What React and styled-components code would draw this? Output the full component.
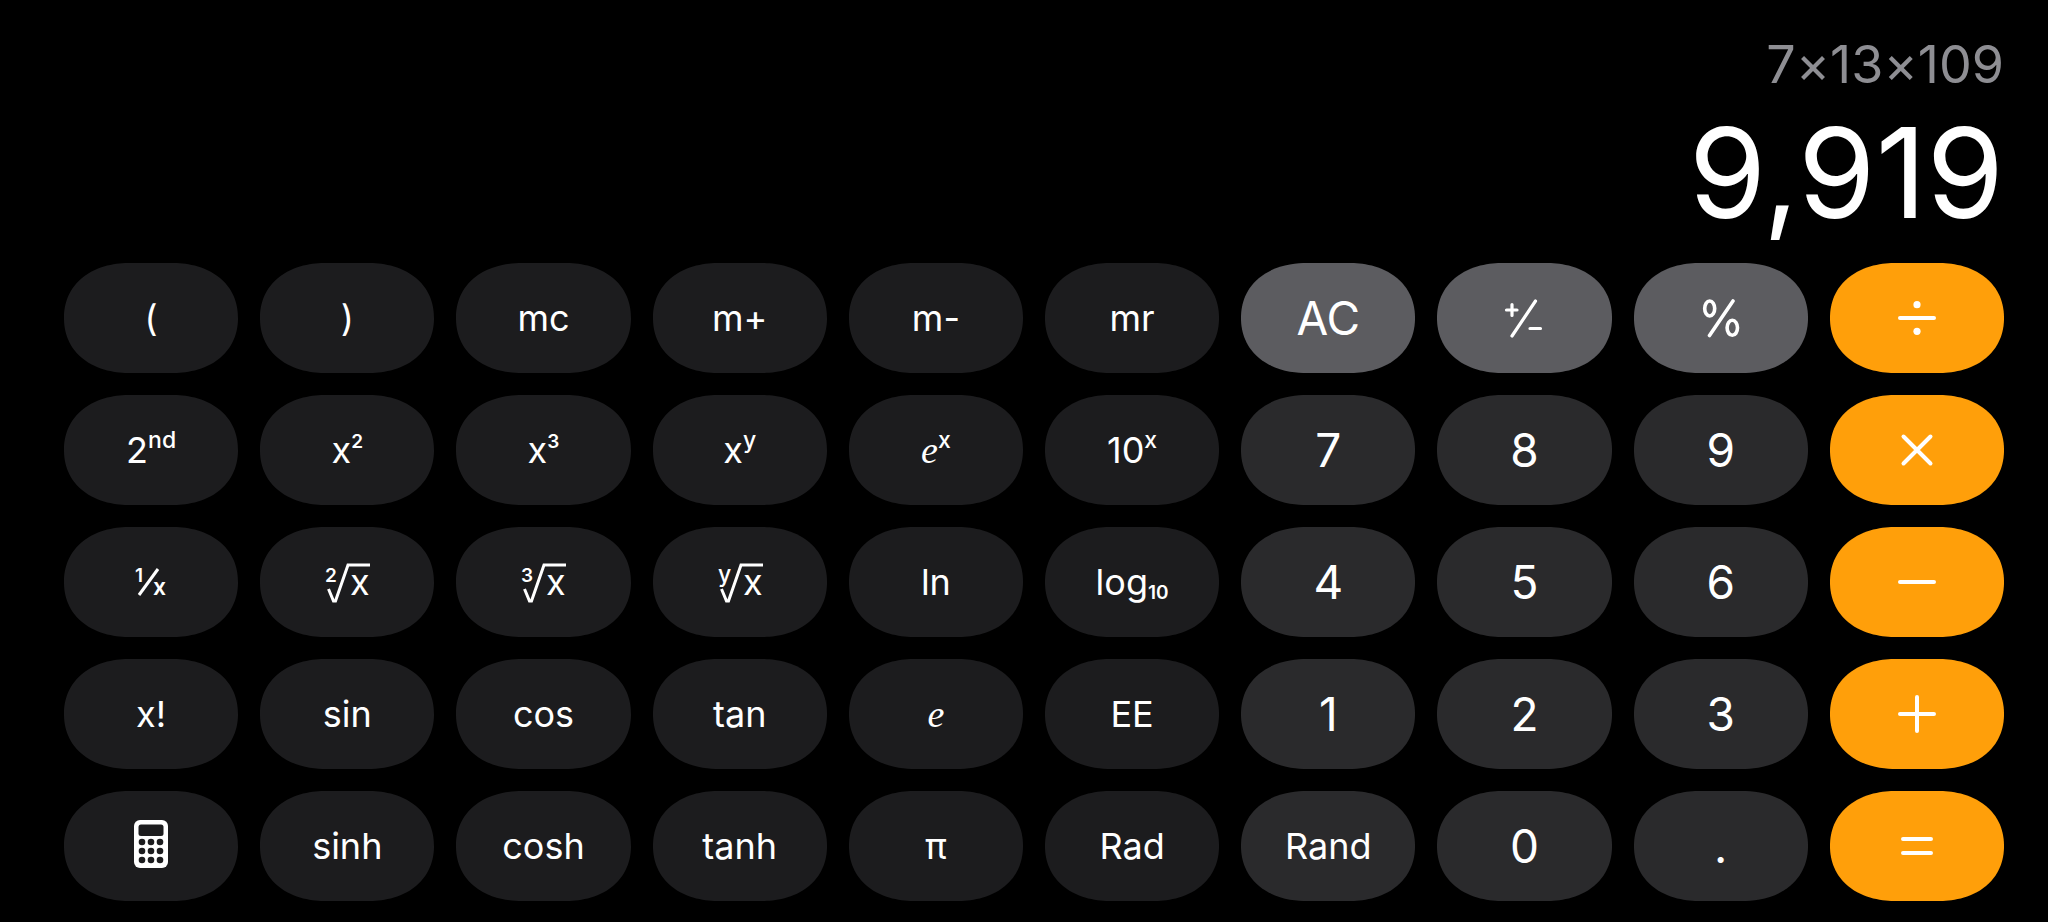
import React from 'react';
import styled, { createGlobalStyle } from 'styled-components';

const GlobalStyle = createGlobalStyle`
  * {
    box-sizing: border-box;
  }

  body {
    margin: 0;
    background: #000;
    font-family: Inter, "Liberation Sans", sans-serif;
  }
`;

const Calculator = styled.main`
  min-height: 100vh;
  display: flex;
  flex-direction: column;
  padding: 33px 44px 21px 64px;
  color: #fff;
`;

const Display = styled.header`
  flex: 1;
  display: flex;
  flex-direction: column;
  align-items: flex-end;
  font-variant-ligatures: no-contextual;
`;

const Expression = styled.div`
  font-size: 52px;
  line-height: 64px;
  color: #8e8e93;
`;

const Result = styled.output`
  font-size: 125px;
  line-height: 152px;
`;

const Keypad = styled.section`
  display: grid;
  grid-template-columns: repeat(10, 1fr);
  grid-auto-rows: 110px;
  gap: 22px;
`;

const keyColors = {
  fn: '#1c1c1e',
  num: '#2a2a2c',
  util: '#5c5c60',
  op: '#ff9f0a',
};

const Key = styled.button`
  display: flex;
  align-items: center;
  justify-content: center;
  padding: 0;
  border: none;
  border-radius: 66px / 55px;
  corner-shape: superellipse(1.12);
  background: ${({ $kind }) => keyColors[$kind]};
  color: #fff;
  font-family: inherit;
  font-size: ${({ $large }) => $large ? '46px' : '36px'};
  line-height: 1;
  cursor: pointer;
`;

const Label = styled.span`
  white-space: nowrap;
`;

const Sup = styled.sup`
  font-size: ${({ $digit }) => $digit ? '19px' : '23px'};
  font-weight: ${({ $digit }) => $digit ? 600 : 500};
  line-height: 0;
  vertical-align: 15px;
`;

const Sub = styled.sub`
  font-size: 19px;
  font-weight: 600;
  line-height: 0;
  vertical-align: -4px;
`;

const Euler = styled.i`
  font-family: "Liberation Serif", serif;
  font-size: 38px;
  line-height: 0;
`;

const Icon = styled.svg`
  display: block;
  fill: none;
  stroke: #fff;
  stroke-width: ${({ $stroke }) => $stroke ?? 4};
  stroke-linecap: ${({ $butt }) => $butt ? 'butt' : 'round'};

  text, circle {
    fill: #fff;
    stroke: none;
  }
`;

function OpIcon(props) {
  return (
    <Icon width="40" height="40" viewBox="0 0 40 40" aria-hidden="true">
      {props.children}
    </Icon>
  );
}

function Root(props) {
  return (
    <Icon $stroke={3} $butt width="46" height="44" viewBox="0 0 46 44" aria-hidden="true">
      <path d="M4.500 29L9.500 41H11.500L24 5H46" />
      <text x="1" y="22" fontSize={props.digit ? 19 : 23} fontWeight={props.digit ? 600 : 500}>{props.index}</text>
      <text x="26" y="35" fontSize="36">x</text>
    </Icon>
  );
}

const plusMinus = (
  <Icon $stroke={3.2} width="40" height="40" viewBox="0 0 40 40">
    <path d="M2.500 12H13M8 6.500V17.500M31.500 3L8 38M26 30.500H36.500" />
  </Icon>
);

const percent = (
  <Icon $stroke={3.6} width="40" height="40" viewBox="0 0 40 40">
    <ellipse cx="8.700" cy="10.500" rx="5" ry="7.500" />
    <ellipse cx="31.300" cy="29.800" rx="5.200" ry="7.500" />
    <path d="M32 3L8.500 37.500" />
  </Icon>
);

const reciprocal = (
  <Icon $stroke={3} $butt width="34" height="44" viewBox="0 0 34 44">
    <path d="M5 35L24 9" />
    <text x="1" y="22" fontSize="19" fontWeight="600">1</text>
    <text x="19" y="35" fontSize="23" fontWeight="600">x</text>
  </Icon>
);

const calculator = (
  <svg width="34" height="48" viewBox="0 0 34 48" fill="#fff">
    <rect x="0" y="0" width="34" height="48" rx="6" />
    <rect x="4.500" y="4.500" width="25" height="11.500" rx="2.500" fill={keyColors.fn} />
    {[22, 31, 40].map((cy) => [8, 17, 26].map((cx) => (
      <circle key={`${cx}-${cy}`} cx={cx} cy={cy} r="3.300" fill={keyColors.fn} />
    )))}
  </svg>
);

const keys = [
  { name: '(', kind: 'fn' },
  { name: ')', kind: 'fn' },
  { name: 'mc', kind: 'fn' },
  { name: 'm+', kind: 'fn' },
  { name: 'm-', kind: 'fn' },
  { name: 'mr', kind: 'fn' },
  { name: 'AC', kind: 'util', large: true },
  { name: 'plus minus', kind: 'util', label: plusMinus },
  { name: 'percent', kind: 'util', label: percent },
  { name: 'divide', kind: 'op', label: <OpIcon><path d="M3 20H37" /><circle cx="20" cy="6.700" r="3.600" /><circle cx="20" cy="33.300" r="3.600" /></OpIcon> },

  { name: 'second', kind: 'fn', label: <>2<Sup>nd</Sup></> },
  { name: 'x squared', kind: 'fn', label: <>x<Sup $digit>2</Sup></> },
  { name: 'x cubed', kind: 'fn', label: <>x<Sup $digit>3</Sup></> },
  { name: 'x to the y', kind: 'fn', label: <>x<Sup>y</Sup></> },
  { name: 'e to the x', kind: 'fn', label: <><Euler>e</Euler><Sup>x</Sup></> },
  { name: '10 to the x', kind: 'fn', label: <>10<Sup>x</Sup></> },
  { name: '7', kind: 'num', large: true },
  { name: '8', kind: 'num', large: true },
  { name: '9', kind: 'num', large: true },
  { name: 'multiply', kind: 'op', label: <OpIcon><path d="M6.500 6.500L33.500 33.500M33.500 6.500L6.500 33.500" /></OpIcon> },

  { name: 'reciprocal', kind: 'fn', label: reciprocal },
  { name: 'square root', kind: 'fn', label: <Root index="2" digit /> },
  { name: 'cube root', kind: 'fn', label: <Root index="3" digit /> },
  { name: 'y root of x', kind: 'fn', label: <Root index="y" /> },
  { name: 'ln', kind: 'fn' },
  { name: 'log 10', kind: 'fn', label: <>log<Sub>10</Sub></> },
  { name: '4', kind: 'num', large: true },
  { name: '5', kind: 'num', large: true },
  { name: '6', kind: 'num', large: true },
  { name: 'subtract', kind: 'op', label: <OpIcon><path d="M3 20H37" /></OpIcon> },

  { name: 'x!', kind: 'fn' },
  { name: 'sin', kind: 'fn' },
  { name: 'cos', kind: 'fn' },
  { name: 'tan', kind: 'fn' },
  { name: 'e', kind: 'fn', label: <Euler>e</Euler> },
  { name: 'EE', kind: 'fn' },
  { name: '1', kind: 'num', large: true },
  { name: '2', kind: 'num', large: true },
  { name: '3', kind: 'num', large: true },
  { name: 'add', kind: 'op', label: <OpIcon><path d="M3 20H37M20 3V37" /></OpIcon> },

  { name: 'switch calculator', kind: 'fn', label: calculator },
  { name: 'sinh', kind: 'fn' },
  { name: 'cosh', kind: 'fn' },
  { name: 'tanh', kind: 'fn' },
  { name: 'π', kind: 'fn' },
  { name: 'Rad', kind: 'fn' },
  { name: 'Rand', kind: 'num' },
  { name: '0', kind: 'num', large: true },
  { name: '.', kind: 'num', large: true },
  { name: 'equals', kind: 'op', label: <OpIcon><path d="M6 13H34M6 27H34" /></OpIcon> },
];

export default function App() {
  return (
    <Calculator>
      <GlobalStyle />
      <Display>
        <Expression>7×13×109</Expression>
        <Result>9,919</Result>
      </Display>
      <Keypad>
        {keys.map(({ name, kind, large, label }) => (
          <Key key={name} type="button" aria-label={name} $kind={kind} $large={large}>
            <Label>{label ?? name}</Label>
          </Key>
        ))}
      </Keypad>
    </Calculator>
  );
}
